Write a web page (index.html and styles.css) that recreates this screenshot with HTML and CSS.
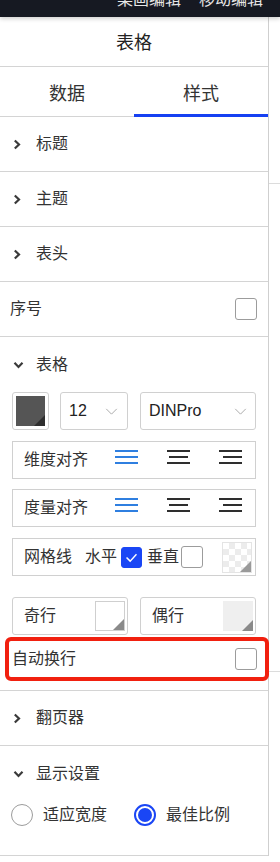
FILE: index.html
```html
<!DOCTYPE html>
<html lang="zh-CN">
<head>
<meta charset="utf-8">
<title>表格</title>
<link rel="stylesheet" href="styles.css">
</head>
<body>
<div class="topbar"><span class="topbar-text">某画编辑</span><span class="topbar-text">移动编辑</span></div>
<div class="main">
  <div class="panel">
    <div class="hdr">表格</div>
    <div class="tabs">
      <div class="tab">数据</div>
      <div class="tab active">样式</div>
    </div>

    <div class="row"><svg class="chev-r" viewBox="0 0 8 11"><polyline points="1.8,1.5 6,5.5 1.8,9.5"/></svg><span>标题</span></div>
    <div class="row"><svg class="chev-r" viewBox="0 0 8 11"><polyline points="1.8,1.5 6,5.5 1.8,9.5"/></svg><span>主题</span></div>
    <div class="row"><svg class="chev-r" viewBox="0 0 8 11"><polyline points="1.8,1.5 6,5.5 1.8,9.5"/></svg><span>表头</span></div>
    <div class="row plain"><span>序号</span><span class="cb"></span></div>

    <div class="sec">
      <div class="sec-head"><svg class="chev-d" viewBox="0 0 11 8"><polyline points="1.5,1.8 5.5,6 9.5,1.8"/></svg><span>表格</span></div>
      <div class="controls">
        <div class="swatch-box"><div class="swatch dark"></div></div>
        <div class="select small"><span>12</span><svg class="sel-chev" viewBox="0 0 14 8"><polyline points="1,1 7,7 13,1"/></svg></div>
        <div class="select big"><span>DINPro</span><svg class="sel-chev" viewBox="0 0 14 8"><polyline points="1,1 7,7 13,1"/></svg></div>
      </div>

      <div class="box align-box first">
        <span class="lbl">维度对齐</span>
        <div class="aligns">
          <svg class="al blue" viewBox="0 0 23 14"><rect x="0" y="0" width="23" height="2"/><rect x="0" y="6" width="23" height="2"/><rect x="0" y="12" width="23" height="2"/></svg>
          <svg class="al" viewBox="0 0 23 14"><rect x="0" y="0" width="23" height="2"/><rect x="2" y="6" width="19" height="2"/><rect x="0" y="12" width="23" height="2"/></svg>
          <svg class="al" viewBox="0 0 23 14"><rect x="0" y="0" width="23" height="2"/><rect x="4" y="6" width="19" height="2"/><rect x="0" y="12" width="23" height="2"/></svg>
        </div>
      </div>
      <div class="box align-box">
        <span class="lbl">度量对齐</span>
        <div class="aligns">
          <svg class="al blue" viewBox="0 0 23 14"><rect x="0" y="0" width="23" height="2"/><rect x="0" y="6" width="23" height="2"/><rect x="0" y="12" width="23" height="2"/></svg>
          <svg class="al" viewBox="0 0 23 14"><rect x="0" y="0" width="23" height="2"/><rect x="2" y="6" width="19" height="2"/><rect x="0" y="12" width="23" height="2"/></svg>
          <svg class="al" viewBox="0 0 23 14"><rect x="0" y="0" width="23" height="2"/><rect x="4" y="6" width="19" height="2"/><rect x="0" y="12" width="23" height="2"/></svg>
        </div>
      </div>
      <div class="box grid-box">
        <span class="lbl">网格线</span>
        <span class="lbl h">水平</span>
        <span class="cb checked"><svg viewBox="0 0 21 21"><polyline points="5,10.5 9,14.5 16,7"/></svg></span>
        <span class="lbl v">垂直</span>
        <span class="cb"></span>
        <div class="swatch checker"></div>
      </div>

      <div class="pair">
        <div class="box pair-box"><span class="lbl">奇行</span><div class="swatch white"></div></div>
        <div class="box pair-box"><span class="lbl">偶行</span><div class="swatch grey"></div></div>
      </div>

      <div class="wrap-row"><span>自动换行</span><span class="cb"></span></div>
    </div>

    <div class="row"><svg class="chev-r" viewBox="0 0 8 11"><polyline points="1.8,1.5 6,5.5 1.8,9.5"/></svg><span>翻页器</span></div>

    <div class="sec display">
      <div class="sec-head"><svg class="chev-d" viewBox="0 0 11 8"><polyline points="1.5,1.8 5.5,6 9.5,1.8"/></svg><span>显示设置</span></div>
      <div class="radios">
        <span class="radio"></span><span class="rlbl first">适应宽度</span>
        <span class="radio on"></span><span class="rlbl">最佳比例</span>
      </div>
    </div>
  </div>
  <div class="strip">
    <div class="seg s1"></div>
    <div class="seg s2"></div>
  </div>
</div>
</body>
</html>
```

FILE: styles.css
```css
* { box-sizing: border-box; }
html, body { margin: 0; padding: 0; background: #fff; }
body {
  width: 280px;
  font-family: "Liberation Sans", "Noto Sans CJK SC", sans-serif;
  color: #333;
  font-size: 16px;
  overflow: hidden;
}
.topbar {
  position: relative;
  z-index: 2;
  height: 17px;
  background: #161922;
  box-shadow: 0 2px 4px rgba(0, 0, 0, 0.18);
  overflow: hidden;
  display: flex;
  gap: 18px;
  padding-left: 117px;
}
.topbar-text {
  color: #e6e6e6;
  font-size: 16px;
  line-height: 16px;
  margin-top: -10px;
  font-family: "Noto Sans CJK SC", sans-serif;
}
.main { display: flex; }
.panel {
  width: 269px;
  border-right: 1px solid #cfcfcf;
  flex: none;
}
.strip { flex: 1; }
.seg { border-bottom: 1px solid #dcdcdc; }
.s1 { height: 167px; }
.s2 { height: 488px; }

.hdr {
  height: 50px;
  border-bottom: 1px solid #d4d4d4;
  display: flex;
  align-items: center;
  justify-content: center;
  font-size: 18px;
  color: #222;
  padding-bottom: 1px;
}
.tabs {
  height: 50px;
  border-bottom: 1px solid #d4d4d4;
  display: grid;
  grid-template-columns: 134px 134px;
}
.tab {
  display: flex;
  align-items: center;
  justify-content: center;
  font-size: 18px;
  color: #333;
  position: relative;
}
.tab.active::after {
  content: "";
  position: absolute;
  left: 0;
  right: 0;
  bottom: -1px;
  height: 3px;
  background: #1640f2;
}
.row {
  height: 55px;
  border-bottom: 1px solid #d4d4d4;
  display: flex;
  align-items: center;
  padding-left: 13px;
  font-size: 16px;
  line-height: 20px;
}
.row.plain {
  padding-left: 10px;
  padding-right: 11px;
  justify-content: space-between;
}
.chev-r {
  width: 8px;
  height: 11px;
  margin-right: 15px;
  fill: none;
  stroke: #3a3a3a;
  stroke-width: 2.2;
}
.chev-d {
  width: 11px;
  height: 8px;
  margin-right: 12px;
  fill: none;
  stroke: #3a3a3a;
  stroke-width: 2.2;
}
.cb {
  width: 22px;
  height: 22px;
  border: 1px solid #9c9c9c;
  border-radius: 3px;
  background: #fff;
  flex: none;
  display: inline-block;
}
.cb.checked {
  background: #1a46f5;
  border-color: #1a46f5;
  width: 21px;
  height: 21px;
}
.cb.checked svg {
  display: block;
  width: 19px;
  height: 19px;
  fill: none;
  stroke: #fff;
  stroke-width: 1.6;
}

.sec {
  padding: 0 12px 9px;
  border-bottom: 1px solid #d4d4d4;
}
.sec-head {
  height: 55px;
  display: flex;
  align-items: center;
  padding-left: 1px;
  font-size: 16px;
  line-height: 20px;
  padding-top: 1px;
}
.controls {
  display: flex;
  height: 38px;
}
.swatch-box {
  width: 37px;
  height: 38px;
  border: 1px solid #d0d0d0;
  border-radius: 3px;
  padding: 3px;
  margin-right: 11px;
}
.swatch { position: relative; overflow: hidden; }
.swatch::after {
  content: "";
  position: absolute;
  right: 0;
  bottom: 0;
  width: 0;
  height: 0;
  border-style: solid;
  border-width: 0 0 11px 11px;
  border-color: transparent transparent #8a8a8a transparent;
}
.swatch.dark {
  width: 29px;
  height: 30px;
  background: #555;
}
.swatch.dark::after { border-bottom-color: #2e2e2e; }
.select {
  height: 38px;
  border: 1px solid #d0d0d0;
  border-radius: 3px;
  display: flex;
  align-items: center;
  justify-content: space-between;
  padding-left: 8px;
  font-size: 16px;
  color: #222;
}
.select.small { width: 68px; margin-right: 12px; padding-right: 9px; }
.select.big { width: 116px; padding-right: 8px; }
.sel-chev {
  width: 13px;
  height: 7px;
  fill: none;
  stroke: #a8a8a8;
  stroke-width: 1.1;
}

.box {
  border: 1px solid #d0d0d0;
  height: 38px;
  display: flex;
  align-items: center;
  padding-left: 11px;
}
.lbl { font-size: 16px; line-height: 20px; color: #333; }
.align-box { margin-top: 10px; }
.align-box.first { margin-top: 11px; }
.aligns {
  margin-left: auto;
  margin-right: 13px;
  width: 127px;
  display: flex;
  justify-content: space-between;
  align-self: flex-start;
  margin-top: 8px;
}
.al { width: 23px; height: 14px; fill: #2e2e2e; }
.al.blue { fill: #2f7fe0; }
.grid-box { margin-top: 11px; }
.grid-box .h { margin-left: 13px; margin-right: 4px; }
.grid-box .v { margin-left: 5px; margin-right: 2px; }
.swatch.checker {
  width: 30px;
  height: 31px;
  margin-left: auto;
  margin-right: 3px;
  background-color: #fff;
  background-image:
    linear-gradient(45deg, #ececec 25%, transparent 25%, transparent 75%, #ececec 75%),
    linear-gradient(45deg, #ececec 25%, transparent 25%, transparent 75%, #ececec 75%);
  background-size: 12px 12px;
  background-position: 0 0, 6px 6px;
  border: 1px solid #e4e4e4;
}
.swatch.checker::after { border-bottom-color: #9a9a9a; }
.pair {
  display: flex;
  gap: 12px;
  margin-top: 21px;
}
.pair-box {
  width: 116px;
  border-radius: 3px;
  padding-right: 2px;
  justify-content: space-between;
}
.swatch.white {
  width: 30px;
  height: 30px;
  border: 1px solid #cfcfcf;
  background: #fff;
}
.swatch.grey {
  width: 30px;
  height: 30px;
  background: #efefef;
}
.wrap-row {
  margin: 2px -13px 0 -7px;
  height: 44px;
  border: 4px solid #f1200f;
  border-radius: 6px;
  display: flex;
  align-items: center;
  justify-content: space-between;
  padding-left: 3px;
  padding-right: 8px;
  font-size: 16px;
  line-height: 20px;
  position: relative;
}

.display { padding: 0 0 26px 12px; }
.radios {
  display: flex;
  align-items: center;
  height: 28px;
  margin-left: -1px;
}
.radio {
  width: 22px;
  height: 22px;
  border: 1px solid #9c9c9c;
  border-radius: 50%;
  flex: none;
  background: #fff;
}
.radio.on {
  border: 2px solid #1a46f5;
  padding: 2px;
  background: #1a46f5;
  background-clip: content-box;
}
.rlbl { font-size: 16px; line-height: 20px; margin-left: 10px; }
.rlbl.first { margin-right: 27px; }
```
